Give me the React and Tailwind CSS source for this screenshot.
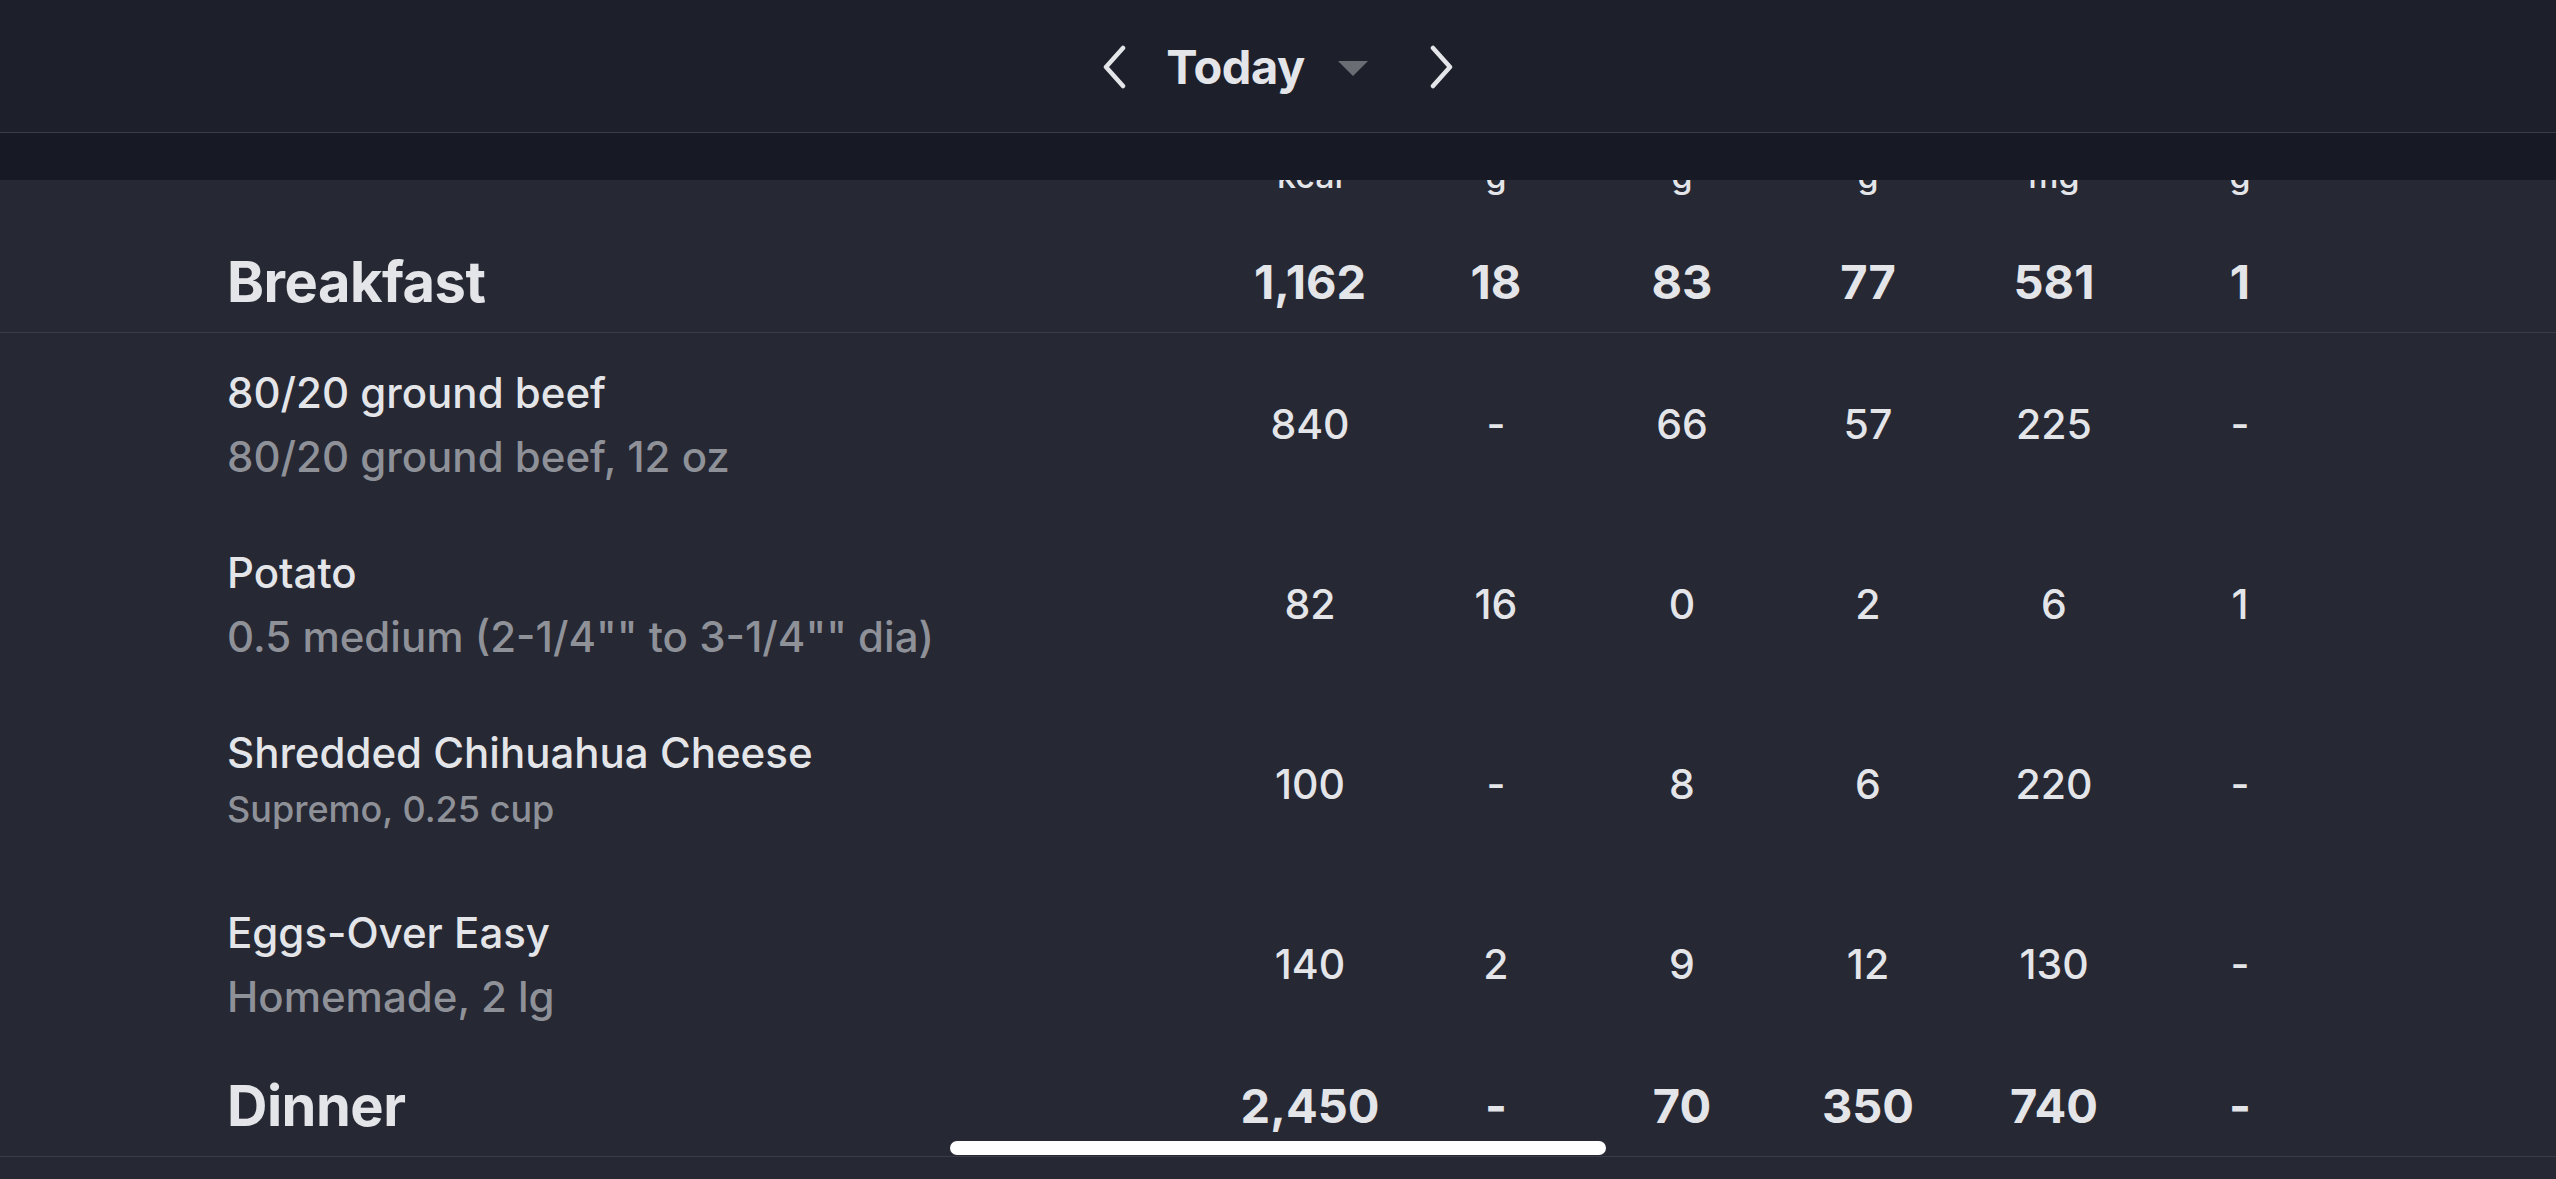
import React from 'react';

const COLS = ['kcal', 'g', 'g', 'g', 'mg', 'g'];

const BREAKFAST = {
  name: 'Breakfast',
  totals: ['1,162', '18', '83', '77', '581', '1'],
  foods: [
    { title: '80/20 ground beef', sub: '80/20 ground beef, 12 oz', vals: ['840', '-', '66', '57', '225', '-'] },
    { title: 'Potato', sub: '0.5 medium (2-1/4"" to 3-1/4"" dia)', vals: ['82', '16', '0', '2', '6', '1'] },
    { title: 'Shredded Chihuahua Cheese', sub: 'Supremo, 0.25 cup', small: true, vals: ['100', '-', '8', '6', '220', '-'] },
    { title: 'Eggs-Over Easy', sub: 'Homemade, 2 lg', vals: ['140', '2', '9', '12', '130', '-'] },
  ],
};

const DINNER = { name: 'Dinner', totals: ['2,450', '-', '70', '350', '740', '-'] };

const Chevron = ({ dir }) => (
  <svg width="26" height="44" viewBox="0 0 26 44" fill="none">
    <path
      d={dir === 'left' ? 'M21 3 L4 22 L21 41' : 'M5 3 L22 22 L5 41'}
      stroke="#e4e5e9"
      strokeWidth="4.5"
      strokeLinecap="round"
      strokeLinejoin="round"
    />
  </svg>
);

const Cells = ({ vals, bold }) => (
  <div className="flex">
    {vals.map((v, i) => (
      <div
        key={i}
        className={`w-[186px] text-center ${bold ? 'text-[47px] font-bold' : 'text-[41px] font-medium'}`}
      >
        {v}
      </div>
    ))}
  </div>
);

const MealRow = ({ meal }) => (
  <div className="flex items-center h-[104px] pt-[3px] pl-[227px] pr-[223px] border-b border-[#3a3c48]">
    <div className="flex-1 text-[56px] font-bold tracking-[-0.5px]">{meal.name}</div>
    <Cells vals={meal.totals} bold />
  </div>
);

const FoodRow = ({ food }) => (
  <div className="flex h-[180px] pl-[227px] pr-[223px]">
    <div className="flex-1 pt-[35px]">
      <div className="text-[42px] leading-[50px] font-medium">{food.title}</div>
      {food.small ? (
        <div className="text-[36px] leading-[42px] mt-[10px] font-medium text-[#8f9199]">{food.sub}</div>
      ) : (
        <div className="text-[42px] leading-[50px] mt-[14px] font-medium text-[#8f9199]">{food.sub}</div>
      )}
    </div>
    <div className="self-center pt-[4px]">
      <Cells vals={food.vals} />
    </div>
  </div>
);

export default function App() {
  return (
    <div
      className="relative w-[2556px] h-[1179px] overflow-hidden bg-[#262833] text-[#e4e5e9]"
      style={{ fontFamily: 'Inter, "Noto Sans", sans-serif' }}
    >
      {/* top bar */}
      <div className="h-[133px] bg-[#1d1f2a] border-b border-[#3a3c48] flex items-center justify-center">
        <div className="flex items-center pt-[2px]">
          <Chevron dir="left" />
          <div className="ml-[38px] text-[47px] font-bold tracking-[-0.5px]">Today</div>
          <svg className="ml-[33px] mt-[4px]" width="30" height="16" viewBox="0 0 30 16">
            <path d="M0 0 H30 L15 15 Z" fill="#6b6d75" />
          </svg>
          <div className="ml-[60px]">
            <Chevron dir="right" />
          </div>
        </div>
      </div>

      {/* column labels, partly hidden under the scroll band */}
      <div className="relative">
        <div className="flex h-[96px] pt-[26px] pl-[227px] pr-[223px]">
          <div className="flex-1" />
          <div className="flex">
            {COLS.map((c, i) => (
              <div key={i} className="w-[186px] text-center text-[34px] leading-none font-medium">
                {c}
              </div>
            ))}
          </div>
        </div>
        <div className="absolute top-0 left-0 right-0 h-[47px] bg-[#171925]" />
      </div>

      <MealRow meal={BREAKFAST} />
      {BREAKFAST.foods.map((f) => (
        <FoodRow key={f.title} food={f} />
      ))}
      <MealRow meal={DINNER} />

      {/* home indicator */}
      <div className="absolute left-[950px] top-[1141px] w-[656px] h-[14px] rounded-full bg-white" />
    </div>
  );
}
